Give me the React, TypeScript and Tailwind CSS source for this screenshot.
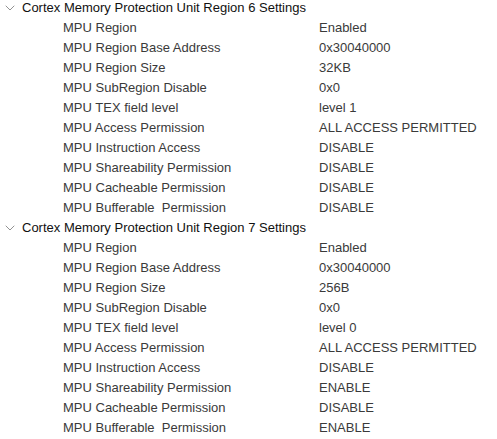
import { ChevronDown } from 'lucide-react';

type Row = [string, string];

const regions: { title: string; rows: Row[] }[] = [
  {
    title: 'Cortex Memory Protection Unit Region 6 Settings',
    rows: [
      ['MPU Region', 'Enabled'],
      ['MPU Region Base Address', '0x30040000'],
      ['MPU Region Size', '32KB'],
      ['MPU SubRegion Disable', '0x0'],
      ['MPU TEX field level', 'level 1'],
      ['MPU Access Permission', 'ALL ACCESS PERMITTED'],
      ['MPU Instruction Access', 'DISABLE'],
      ['MPU Shareability Permission', 'DISABLE'],
      ['MPU Cacheable Permission', 'DISABLE'],
      ['MPU Bufferable  Permission', 'DISABLE'],
    ],
  },
  {
    title: 'Cortex Memory Protection Unit Region 7 Settings',
    rows: [
      ['MPU Region', 'Enabled'],
      ['MPU Region Base Address', '0x30040000'],
      ['MPU Region Size', '256B'],
      ['MPU SubRegion Disable', '0x0'],
      ['MPU TEX field level', 'level 0'],
      ['MPU Access Permission', 'ALL ACCESS PERMITTED'],
      ['MPU Instruction Access', 'DISABLE'],
      ['MPU Shareability Permission', 'ENABLE'],
      ['MPU Cacheable Permission', 'DISABLE'],
      ['MPU Bufferable  Permission', 'ENABLE'],
    ],
  },
];

export default function App() {
  return (
    <div
      className="w-[497px] h-[439px] overflow-hidden bg-white text-[13px]"
      style={{ fontFamily: "'Liberation Sans', Arial, sans-serif" }}
    >
      <div className="-mt-[2px]">
        {regions.map((region) => (
          <div key={region.title}>
            <div className="flex items-center h-5 text-[#111]">
              <ChevronDown className="w-4 h-4 ml-[2px] mr-[4px] text-[#8a8a8a]" strokeWidth={1.4} />
              <span className="whitespace-pre">{region.title}</span>
            </div>
            {region.rows.map(([label, value], i) => (
              <div key={i} className="flex items-center h-5 text-[#3a3a3a]">
                <span className="w-[319px] pl-[63px] shrink-0 whitespace-pre">{label}</span>
                <span className="whitespace-pre">{value}</span>
              </div>
            ))}
          </div>
        ))}
      </div>
    </div>
  );
}
